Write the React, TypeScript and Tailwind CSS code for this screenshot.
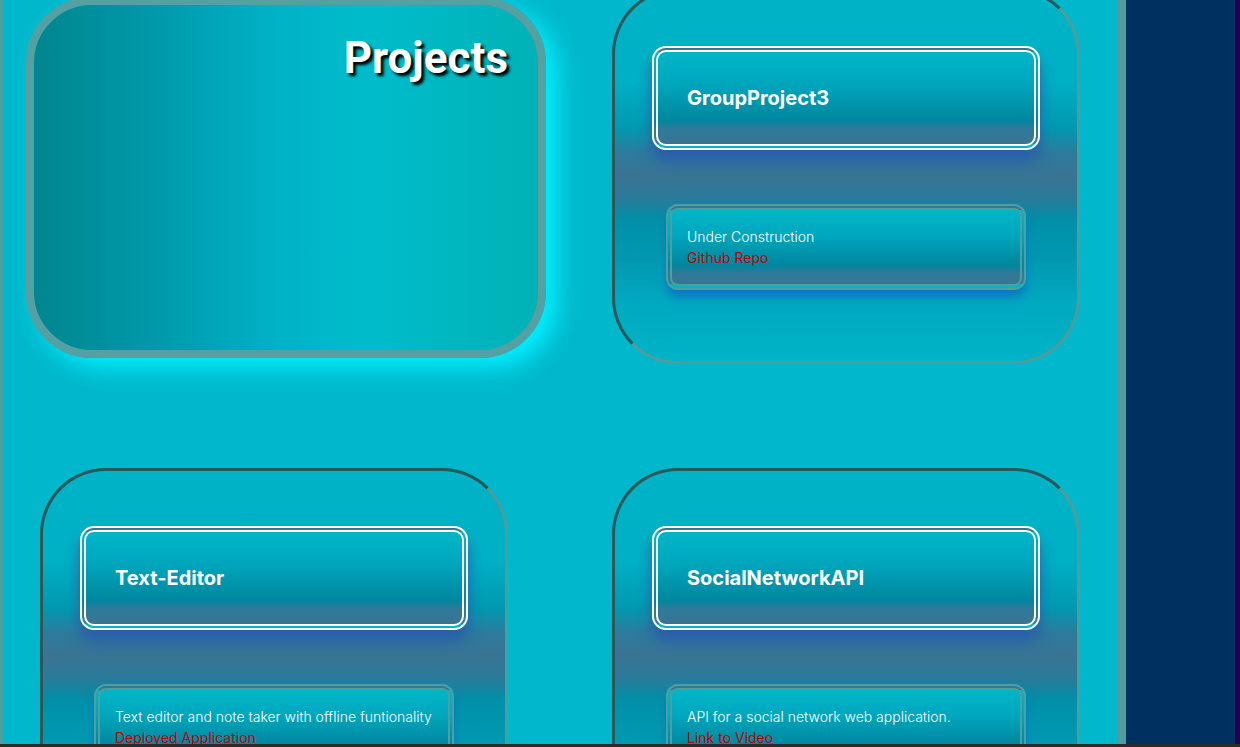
import React from "react";

type CardProps = { title: string; desc: string; link: string };

function Card({ title, desc, link }: CardProps) {
  return (
    <div className="w-[468px] h-[376px] shrink-0 rounded-[66px] border-[3px] border-t-[#2a5757] border-l-[#2a5757] border-r-[#4f9c9e] border-b-[#4f9c9e] bg-[linear-gradient(180deg,#00b3c7_0%,#00b0c4_24%,#0099b1_37%,#2f7a9c_44%,#3a7494_50%,#2a7a9a_56%,#0090a8_62%,#0098b0_72%,#00a9c0_84%,#00b3c7_100%)] flex flex-col pt-[55px]">
      <div className="mx-[37px] h-[104px] rounded-[14px] border-[6px] border-double border-white bg-[linear-gradient(180deg,#00b6ca_0%,#00a6bc_35%,#0090a8_62%,#0087a0_74%,#2f7a98_84%,#3a7494_100%)] shadow-[0_12px_14px_#2a5ea8] flex items-center pl-[29px]">
        <span className="font-['Inter',sans-serif] font-bold text-[20px] leading-[28px] text-white">
          {title}
        </span>
      </div>
      <div className="mx-[51px] mt-[54px] h-[86px] rounded-[12px] border-[6px] border-double border-[#4f9ea0] bg-[linear-gradient(180deg,#00b6ca_0%,#00a6bc_35%,#0090a8_62%,#0087a0_74%,#2f7a98_86%,#3a7494_100%)] shadow-[0_7px_10px_#0a78c4] flex flex-col justify-center pl-[15px]">
        <span className="font-['Inter',sans-serif] font-light text-[14px] leading-[21px] text-white whitespace-nowrap">
          {desc}
        </span>
        <span className="font-['Inter',sans-serif] text-[14px] leading-[21px] text-[#c40000] whitespace-nowrap">
          {link}
        </span>
      </div>
    </div>
  );
}

export default function App() {
  return (
    <div className="w-[1240px] h-[747px] overflow-hidden flex flex-col bg-[#2b2b2b]">
      <div className="flex h-[744px] shrink-0">
        <main className="w-[1126px] h-full shrink-0 bg-[#00b7cb] border-l-[3px] border-r-[9px] border-[#4f9c9e] overflow-hidden">
          <div className="mt-[-12px] px-[37px] flex flex-col gap-[104px]">
            <div className="flex justify-between">
              <div className="w-[468px] shrink-0">
                <div className="ml-[-14px] mt-[9px] w-[520px] h-[361px] rounded-[66px] border-[8px] border-[#55a0a2] bg-[linear-gradient(90deg,#00868f_0%,#009aab_25%,#00b2c6_48%,#00bccb_66%,#00b2b6_100%)] shadow-[12px_10px_24px_#00f0ff] flex justify-end pt-[31px] pr-[30px]">
                  <h1 className="font-['Roboto',sans-serif] font-bold text-[44px] leading-[44px] text-white [text-shadow:3px_3px_3px_#000] h-[44px]">
                    Projects
                  </h1>
                </div>
              </div>
              <Card title="GroupProject3" desc="Under Construction" link="Github Repo" />
            </div>
            <div className="flex justify-between">
              <Card
                title="Text-Editor"
                desc="Text editor and note taker with offline funtionality"
                link="Deployed Application"
              />
              <Card
                title="SocialNetworkAPI"
                desc="API for a social network web application."
                link="Link to Video"
              />
            </div>
          </div>
        </main>
        <div className="flex-1 bg-[#003060]" />
        <div className="w-[5px] bg-[#1f0052]" />
      </div>
      <div className="h-[3px] bg-[#2b2b2b]" />
    </div>
  );
}
